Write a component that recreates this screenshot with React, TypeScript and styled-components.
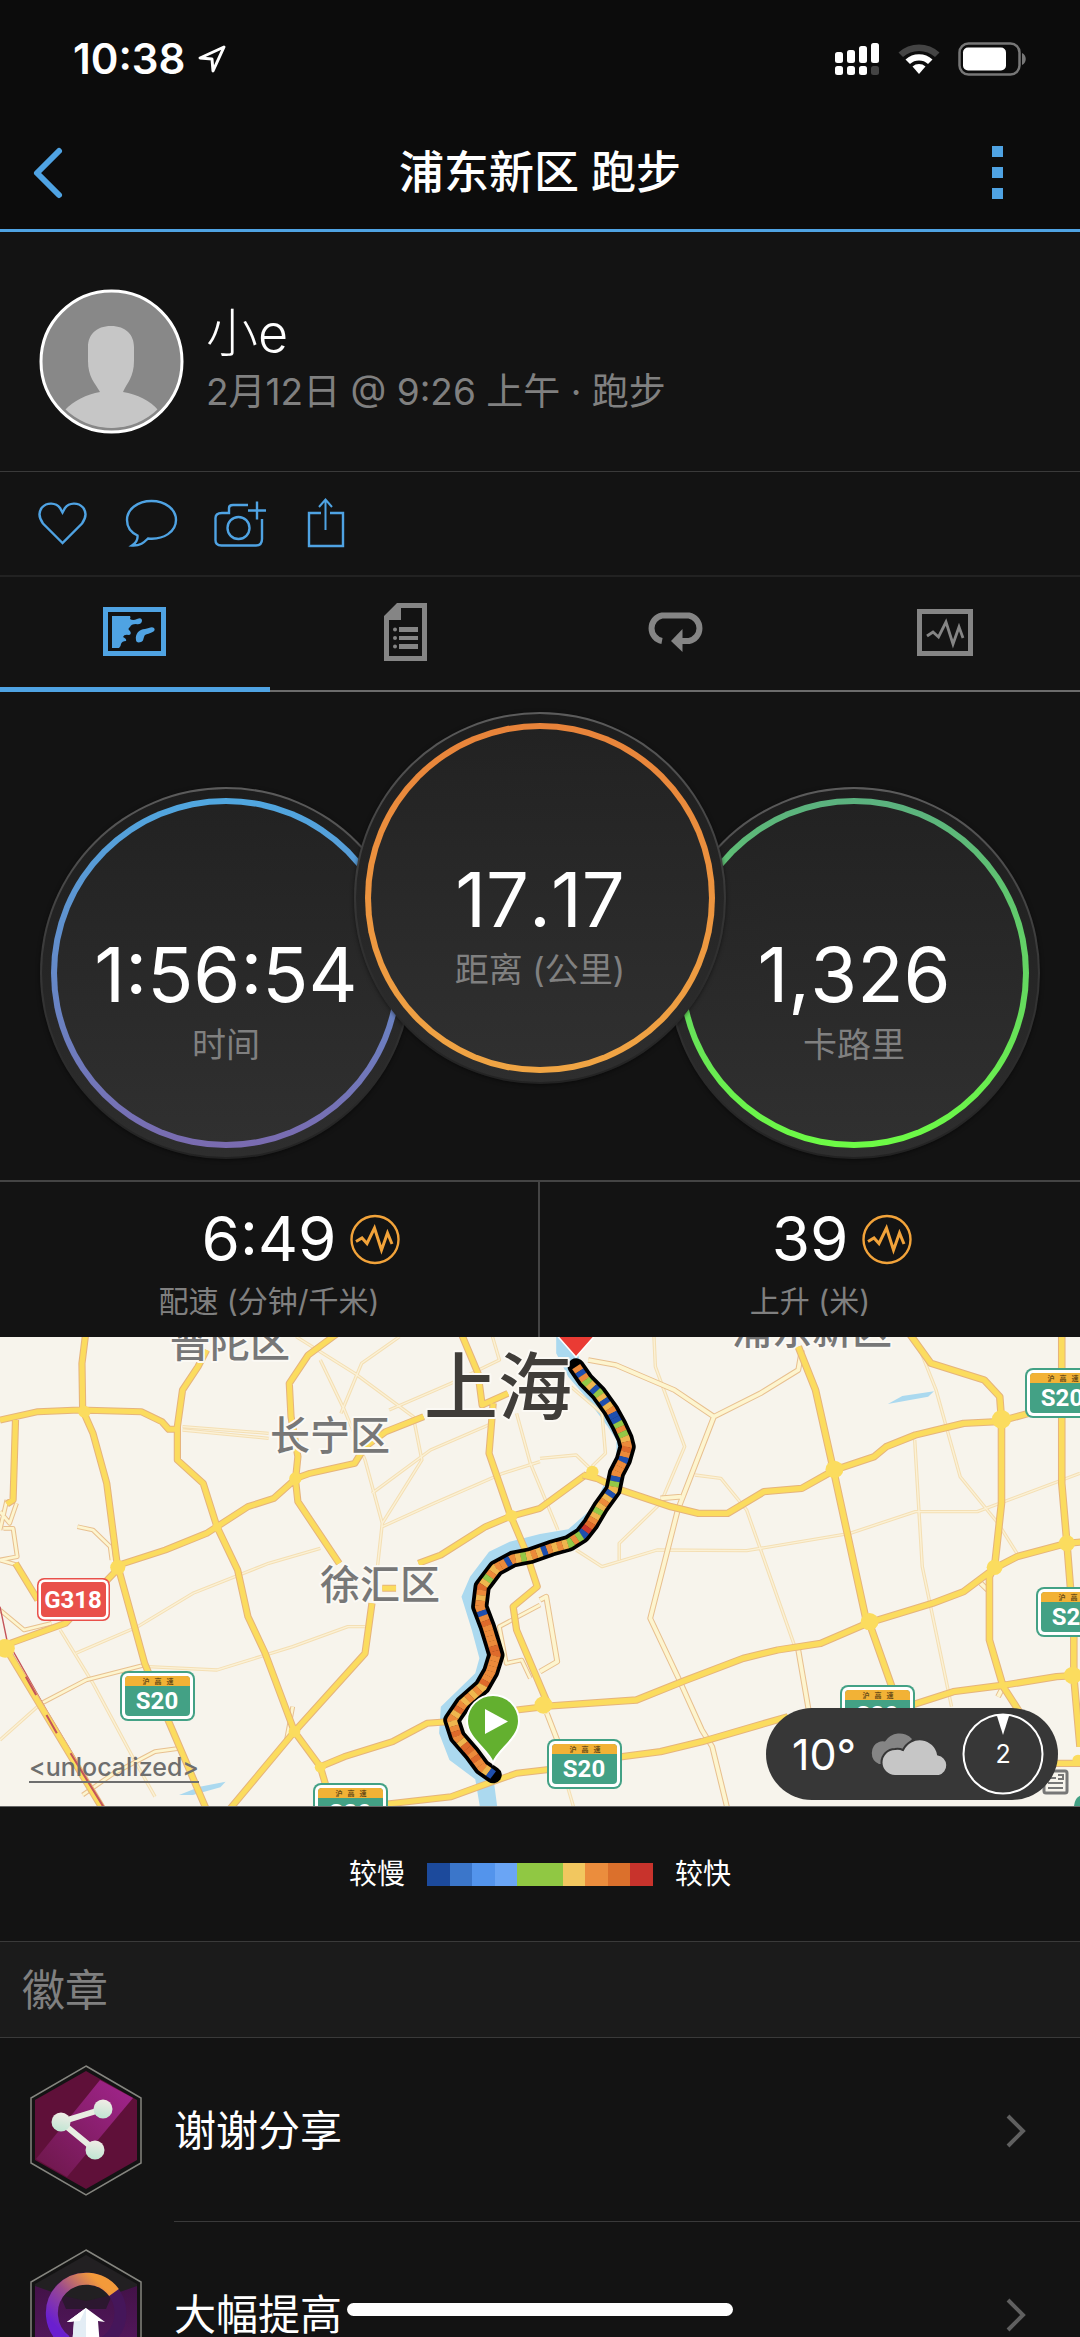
import React from 'react';
import styled, { createGlobalStyle } from 'styled-components';

const colors = {
  page: '#131313',
  header: '#0c0c0c',
  band: '#1b1b1b',
  line: '#3a3a3a',
  blue: '#4fa3e3',
  grey: '#808080',
  amber: '#f2a33a',
};

const GlobalStyle = createGlobalStyle`
  * { box-sizing: border-box; }
  body {
    margin: 0;
    background: ${colors.page};
    color: #fff;
    font-family: Inter, "Noto Sans CJK SC", sans-serif;
  }
  h1, h2, p, ul, dl, dd { margin: 0; padding: 0; }
  button { margin: 0; padding: 0; border: 0; background: none; color: inherit; font: inherit; cursor: pointer; }
  svg { display: block; }
`;

/* ---------- shell ---------- */

const Screen = styled.div`
  display: flex;
  flex-direction: column;
  height: 100vh;
  overflow: hidden;
`;

const Header = styled.header`
  flex: none;
  background: ${colors.header};
  border-bottom: 3px solid ${colors.blue};
`;

const StatusBar = styled.div`
  display: flex;
  align-items: center;
  justify-content: space-between;
  height: 117px;
  padding: 0 53px 0 73px;
`;

const StatusGroup = styled.div`
  display: flex;
  align-items: center;
  gap: ${(p: { $gap: number }) => p.$gap}px;
`;

const Clock = styled.span`
  font-size: 42px;
  font-weight: 600;
  line-height: 48px;
`;

const NavBar = styled.nav`
  display: grid;
  grid-template-columns: 1fr auto 1fr;
  align-items: center;
  height: 112px;
  padding: 0 77px 0 32px;
`;

const NavButton = styled.button<{ $end?: boolean }>`
  justify-self: ${(p) => (p.$end ? 'end' : 'start')};
`;

const Title = styled.h1`
  padding-left: 45px;
  font-size: 45px;
  font-weight: 500;
  line-height: 64px;
`;

const Content = styled.main`
  flex: 1;
  min-height: 0;
  overflow-y: auto;
  scrollbar-width: none;
`;

const HomeIndicator = styled.div`
  position: fixed;
  left: 50%;
  bottom: 21px;
  width: 386px;
  height: 13px;
  margin-left: -193px;
  border-radius: 7px;
  background: #fff;
`;

/* ---------- profile ---------- */

const Profile = styled.section`
  display: flex;
  align-items: center;
  gap: 22px;
  height: 240px;
  padding: 20px 39px 0;
  border-bottom: 1px solid ${colors.line};
`;

const ProfileText = styled.div`
  display: flex;
  flex-direction: column;
`;

const Name = styled.h2`
  font-size: 52px;
  font-weight: 300;
  line-height: 60px;
`;

const When = styled.p`
  color: ${colors.grey};
  font-size: 37px;
  font-weight: 400;
  line-height: 56px;
`;

const Actions = styled.section`
  display: flex;
  align-items: center;
  gap: 36px;
  height: 105px;
  padding: 0 36px 2px;
  border-bottom: 2px solid #222;
`;

const Tabs = styled.div`
  display: grid;
  grid-template-columns: repeat(4, 1fr);
  height: 115px;
`;

const Tab = styled.button<{ $active?: boolean }>`
  display: flex;
  align-items: center;
  justify-content: center;
  padding-bottom: 5px;
  color: ${(p) => (p.$active ? colors.blue : '#858585')};
  box-shadow: ${(p) => (p.$active ? `inset 0 -5px ${colors.blue}` : 'inset 0 -2px #6c6c6c')};
`;

/* ---------- gauges ---------- */

const Gauges = styled.section`
  display: flex;
  justify-content: center;
  align-items: flex-end;
  padding: 20px 0 21px;
  border-bottom: 2px solid #444;
`;

const Rim = styled.div<{ $raised?: boolean }>`
  position: relative;
  z-index: ${(p) => (p.$raised ? 1 : 0)};
  flex: none;
  width: 372px;
  height: 372px;
  margin: ${(p) => (p.$raised ? '0 -58px 75px' : '0')};
  padding: 9px;
  border: 2px solid transparent;
  border-radius: 50%;
  background:
    linear-gradient(#1d1d1d, #2e2e2e) padding-box,
    linear-gradient(#5c5c5c, #363636 50%, #222) border-box;
  box-shadow: 0 1px 4px rgba(0, 0, 0, 0.5);
`;

const Face = styled.div<{ $from: string; $to: string }>`
  display: flex;
  flex-direction: column;
  align-items: center;
  height: 100%;
  padding-top: 124px;
  border: 6px solid transparent;
  border-radius: 50%;
  background:
    linear-gradient(#222, #303030) padding-box,
    linear-gradient(${(p) => p.$from}, ${(p) => p.$to}) border-box;
`;

const GaugeValue = styled.span`
  font-size: 76px;
  font-weight: 400;
  font-kerning: none;
  line-height: 92px;
`;

const GaugeLabel = styled.span`
  color: ${colors.grey};
  font-size: 34px;
  font-weight: 400;
  line-height: 50px;
`;

/* ---------- secondary stats ---------- */

const Stats = styled.section`
  display: grid;
  grid-template-columns: 1fr 1fr;
`;

const Stat = styled.div`
  padding: 20px 0 14px;
  text-align: center;
  &:first-child { border-right: 2px solid #444; }
`;

const StatTop = styled.div`
  display: grid;
  grid-template-columns: 1fr auto 1fr;
  align-items: center;
  gap: 14px;
`;

const StatValue = styled.span`
  grid-column: 2;
  font-size: 62px;
  line-height: 74px;
`;

const StatLabel = styled.p`
  padding-top: 3px;
  color: ${colors.grey};
  font-size: 30px;
  font-weight: 400;
  line-height: 44px;
`;

/* ---------- map ---------- */

const MapBox = styled.section`
  position: relative;
  overflow: hidden;
  border-bottom: 1px solid #666;
`;

const MapLink = styled.a`
  position: absolute;
  left: 29px;
  bottom: 23px;
  border-bottom: 2px solid #6e6e6e;
  color: #6e6e6e;
  font-size: 25px;
  font-weight: 500;
  line-height: 28px;
  text-decoration: none;
`;

const Weather = styled.div`
  position: absolute;
  right: 22px;
  bottom: 6px;
  display: flex;
  align-items: center;
  justify-content: space-between;
  width: 292px;
  height: 92px;
  padding: 0 14px 0 26px;
  border-radius: 46px;
  background: #373737;
`;

const Temperature = styled.span`
  font-size: 43px;
  line-height: 50px;
`;

const Wind = styled.div`
  display: grid;
  place-items: center;
  width: 82px;
  height: 82px;
  font-size: 25px;
  line-height: 30px;
  > * { grid-area: 1 / 1; }
`;

/* ---------- legend ---------- */

const Legend = styled.div`
  display: flex;
  align-items: center;
  justify-content: center;
  gap: 22px;
  height: 135px;
  border-bottom: 1px solid ${colors.line};
  font-size: 28px;
  line-height: 40px;
`;

const Scale = styled.div`
  display: grid;
  grid-template-columns: repeat(10, 1fr);
  width: 226px;
  height: 23px;
`;

const Swatch = styled.span<{ $color: string }>`
  background: ${(p) => p.$color};
`;

/* ---------- badges ---------- */

const SectionTitle = styled.h2`
  padding: 16px 22px 15px;
  border-bottom: 1px solid ${colors.line};
  background: ${colors.band};
  color: ${colors.grey};
  font-size: 43px;
  font-weight: 400;
  line-height: 64px;
`;

const BadgeList = styled.ul`
  list-style: none;
`;

const BadgeRow = styled.button`
  display: grid;
  grid-template-columns: 112px 1fr;
  gap: 32px;
  width: 100%;
  height: 184px;
  padding-left: 30px;
  align-items: center;
  text-align: left;
`;

const BadgeBody = styled.span`
  display: flex;
  align-items: center;
  justify-content: space-between;
  height: 100%;
  padding: 2px 52px 0 0;
  border-bottom: 1px solid ${colors.line};
  font-size: 42px;
  line-height: 60px;
`;

/* ---------- icons ---------- */

const LocationIcon = () => (
  <svg width="30" height="30" viewBox="0 0 30 30" fill="none" stroke="#fff" strokeWidth="3" strokeLinejoin="round">
    <path d="M27 3 L3 14 L15 15 L16 27 Z" />
  </svg>
);

const SignalIcon = () => (
  <svg width="46" height="34" viewBox="0 0 46 34" fill="#fff">
    <rect x="1" y="10" width="8" height="11" rx="2.5" />
    <rect x="13" y="8" width="8" height="13" rx="2.5" />
    <rect x="25" y="4" width="8" height="17" rx="2.5" />
    <rect x="37" y="1" width="8" height="20" rx="2.5" />
    <rect x="1" y="24" width="8" height="9" rx="2.5" />
    <rect x="13" y="24" width="8" height="9" rx="2.5" />
    <rect x="25" y="24" width="8" height="9" rx="2.5" />
    <rect x="37" y="24" width="8" height="9" rx="2.5" fill="#444" />
  </svg>
);

const WifiIcon = () => (
  <svg width="42" height="32" viewBox="0 0 42 32">
    <path d="M0.500 9.500 A30 30 0 0 1 41.500 9.500 L37 14 A24 24 0 0 0 5 14 Z" fill="#444" />
    <path d="M7.500 16.500 A20 20 0 0 1 34.500 16.500 L30 21 A13.500 13.500 0 0 0 12 21 Z" fill="#fff" />
    <path d="M14.500 23.500 A10 10 0 0 1 27.500 23.500 L21 31 Z" fill="#fff" />
  </svg>
);

const BatteryIcon = () => (
  <svg width="69" height="34" viewBox="0 0 69 34">
    <rect x="1.500" y="1.500" width="60" height="31" rx="9" fill="none" stroke="#777" strokeWidth="2.500" />
    <rect x="5" y="5.500" width="43" height="23" rx="5" fill="#fff" />
    <path d="M64 11 C69 13 69 21 64 23 Z" fill="#777" />
  </svg>
);

const BackIcon = () => (
  <svg width="32" height="54" viewBox="0 0 32 54" fill="none" stroke={colors.blue} strokeWidth="6" strokeLinecap="round" strokeLinejoin="round">
    <path d="M27 5 L5 27 L27 49" />
  </svg>
);

const MoreIcon = () => (
  <svg width="11" height="54" viewBox="0 0 11 54" fill={colors.blue}>
    <rect width="11" height="11" />
    <rect y="21" width="11" height="11" />
    <rect y="42" width="11" height="11" />
  </svg>
);

const Avatar = () => (
  <svg width="145" height="145" viewBox="0 0 145 145" role="img" aria-label="小e">
    <defs>
      <clipPath id="avatarClip"><circle cx="72.500" cy="72.500" r="66.500" /></clipPath>
    </defs>
    <circle cx="72.500" cy="72.500" r="70.500" fill="#888" stroke="#fff" strokeWidth="3" />
    <g clipPath="url(#avatarClip)" fill="#c6c6c6">
      <path d="M72 37 C87 37 95 46 95 58 V72 C95 88 88 94 84 103 C98 105 112 112 119 121 C106 136 90 139 72 139 C54 139 38 136 26 121 C34 112 48 105 61 103 C56 94 49 88 49 72 V58 C49 46 57 37 72 37 Z" />
    </g>
  </svg>
);

const actionIconProps = { fill: 'none', stroke: colors.blue, strokeWidth: 2.4 };

const HeartIcon = () => (
  <svg width="52" height="54" viewBox="0 0 52 54" {...actionIconProps}>
    <path d="M26.500 47 L7 27.500 C3 22 2.500 16 6 11.500 C11 6 20 6.500 24 12 L26.500 16.500 L29 12 C33 6.500 42 6 47 11.500 C50.500 16 50 22 46 27.500 Z" />
  </svg>
);

const CommentIcon = () => (
  <svg width="54" height="54" viewBox="0 0 54 54" {...actionIconProps}>
    <path d="M27.500 5 C41.500 5 52 13.500 52 24 C52 35.500 40 44 24 42.500 C20 46.500 16 50 8 49.500 C12.500 46.500 14 43.500 13.500 39.500 C6 36 3 30.500 3 24 C3 13.500 13.500 5 27.500 5 Z" />
  </svg>
);

const CameraIcon = () => (
  <svg width="56" height="54" viewBox="3 0 56 54" {...actionIconProps}>
    <path d="M37 9 H22 Q18 9 18 12 V17 H11 Q4 17 4.500 23 V43 Q4 49.500 10.500 49.500 H45 Q51 49.500 51 43 V23" />
    <circle cx="27.500" cy="32" r="11" />
    <path d="M46 5.500 V23.500 M37 14.500 H55" />
  </svg>
);

const ShareIcon = () => (
  <svg width="40" height="54" viewBox="0 0 40 54" {...actionIconProps}>
    <path d="M15 17 H3 V50 H37 V17 H24" />
    <path d="M19.500 34 V4 M13 11 L19.500 3.500 L26 11" strokeWidth="2" />
  </svg>
);

const MapIcon = () => (
  <svg width="64" height="50" viewBox="0 0 64 50" fill="currentColor">
    <path fillRule="evenodd" d="M0 0 H63 V49 H0 Z M5 5 V44 H58 V5 Z" />
    <path d="M9 9 H27 Q28 10 27 12 Q30 14 34 12 Q39 10 39 14 Q38 18 33 17 Q28 17 27 20 Q24 22 27 24 Q29 27 26 28 Q21 27 20 30 Q24 32 23 34 Q19 34 18 37 Q18 39 16 41 H9 Z" />
    <path d="M33 33 C32 27 36 22 42 22 C46 21 49 19 51 21 C54 25 46 26 42 28 C40 31 41 34 38 35 C35 36 33 35 33 33 Z" />
  </svg>
);

const NotesIcon = () => (
  <svg width="43" height="59" viewBox="0 0 43 59" fill="currentColor">
    <path fillRule="evenodd" d="M13 0 H43 V58 H0 V13 Z M17 5 V17 H5 V53 H38 V5 Z" />
    <circle cx="11" cy="26.500" r="2" />
    <circle cx="11" cy="35" r="2" />
    <circle cx="11" cy="43.500" r="2" />
    <path d="M15 24 H34 V29 H15 Z M15 33 H34 V37 H15 Z M15 41 H34 V46 H15 Z" />
  </svg>
);

const LapIcon = () => (
  <svg width="59" height="41" viewBox="0 0 59 41">
    <path d="M16 29 A13 13 0 0 1 16 3.500 H43 A13 13 0 0 1 43 29 H34" fill="none" stroke="currentColor" strokeWidth="6" />
    <path d="M25 29 L36.500 17 V40 Z" fill="currentColor" />
  </svg>
);

const ChartIcon = () => (
  <svg width="56" height="47" viewBox="0 0 56 47" fill="none" stroke="currentColor">
    <rect x="2.500" y="2.500" width="51" height="42" strokeWidth="5" />
    <path d="M10 27 L16 23 L21.500 28 L29 13 L36 35 L42 18 L46 29" strokeWidth="2.800" />
  </svg>
);

const TrendIcon = () => (
  <svg width="50" height="51" viewBox="0 0 50 51" fill="none" stroke={colors.amber}>
    <circle cx="25" cy="25.500" r="23.500" strokeWidth="2.400" />
    <path d="M6 27.500 L12 24 L17 29.500 L24.500 14 L31.500 36 L37.500 19 L42 30" strokeWidth="3" />
  </svg>
);

const CloudIcon = () => (
  <svg width="84" height="48" viewBox="0 0 84 48">
    <path d="M12 34 A12 12 0 0 1 12 12 Q14 11 18 11.500 A17 17 0 0 1 45 9 L36 20 L16 34 Z" fill="#858585" />
    <path d="M28 46 A13 13 0 0 1 28 19 Q32 18 36 20 A18.500 18.500 0 0 1 71 24.500 A11 11 0 0 1 72 46 Z" fill="#c6c6c6" stroke="#373737" strokeWidth="2" />
  </svg>
);

const CompassIcon = () => (
  <svg width="82" height="82" viewBox="0 0 82 82">
    <circle cx="41" cy="41" r="39.500" fill="none" stroke="#fff" strokeWidth="2" />
    <path d="M34.500 1.500 H47.500 L41 22 Z" fill="#fff" />
  </svg>
);

const ChevronIcon = () => (
  <svg width="24" height="36" viewBox="0 0 24 36" fill="none" stroke="#606060" strokeWidth="4">
    <path d="M4 3 L19 18 L4 33" />
  </svg>
);

const ShareBadge = () => (
  <svg width="112" height="131" viewBox="0 0 112 131">
    <defs>
      <linearGradient id="stripe" x1="1" y1="0" x2="0" y2="1">
        <stop offset="0" stopColor="#a3258e" />
        <stop offset="1" stopColor="#6b1748" />
      </linearGradient>
      <linearGradient id="node" x1="0.600" y1="0" x2="0.400" y2="1">
        <stop offset="0" stopColor="#f1ece6" />
        <stop offset="1" stopColor="#bfe5d2" />
      </linearGradient>
    </defs>
    <path d="M56 1 L111 33 V98 L56 130 L1 98 V33 Z" fill="#131313" stroke="#85857f" strokeWidth="1.500" />
    <path d="M56 6 L107 35 V95 L56 124 L5 95 V35 Z" fill="#5f1039" />
    <path d="M70 15 L103 33 L37 112 L6 94 Z" fill="url(#stripe)" />
    <path d="M73 44 L31 57 L65 85" fill="none" stroke="#e8ede2" strokeWidth="6" />
    <g fill="url(#node)">
      <circle cx="73" cy="44" r="9.500" />
      <circle cx="31" cy="57" r="9.500" />
      <circle cx="65" cy="85" r="9.500" />
    </g>
  </svg>
);

const ImproveBadge = () => (
  <svg width="112" height="131" viewBox="0 0 112 131">
    <defs>
      <linearGradient id="wall" x1="0" y1="0" x2="0" y2="1">
        <stop offset="0" stopColor="#431248" />
        <stop offset="1" stopColor="#5a1a66" />
      </linearGradient>
      <linearGradient id="sweep" x1="0" y1="1" x2="1" y2="0">
        <stop offset="0.150" stopColor="#6a1fd0" />
        <stop offset="0.500" stopColor="#9a4a90" />
        <stop offset="0.850" stopColor="#f39a3a" />
      </linearGradient>
    </defs>
    <path d="M56 1 L111 33 V98 L56 130 L1 98 V33 Z" fill="#131313" stroke="#85857f" strokeWidth="1.500" />
    <path d="M56 6 L107 35 V95 L56 124 L5 95 V35 Z" fill="#222022" />
    <path d="M5 37 L56 55 L107 37 V95 L56 124 L5 95 Z" fill="url(#wall)" />
    <path d="M30 46 L56 52 L82 46 L76 60 H36 Z" fill="#2c1730" />
    <circle cx="56" cy="64" r="34.500" fill="none" stroke="#45165a" strokeWidth="12" />
    <path d="M36 92 A34.500 34.500 0 1 1 84 43.500" fill="none" stroke="url(#sweep)" strokeWidth="12" />
    <path d="M56 59 L75 73 L68 72 L71 110 H41 L44 72 L37 73 Z" fill="#fff" />
    <path d="M56 59 L56 110 H41 L44 72 L37 73 Z" fill="#e3edf5" />
    <path d="M56 59 L37 73 L50 72 Z" fill="#fff" />
  </svg>
);

/* ---------- map drawing ---------- */

const westArterials = [
  'M250 0 L238 100 L240 240 L270 310 L310 460 L340 700 L420 1000 L490 1175 L600 1440',
  'M0 270 L110 245 L230 240 L410 245 L470 275 L490 298 L512 298',
  'M45 270 L38 510 L20 522',
  'M600 60 L575 110 L530 180 L515 290 L515 390 L590 460 L630 590 L690 720 L720 860 L770 970 L855 1205 L930 1310 L950 1380',
  'M980 10 L895 75 L840 160 L845 260 L865 380 L858 450 L865 515 L985 700',
  'M0 955 L30 940 L190 880 L330 730 L345 705 L480 660 L600 610 L720 530 L795 505 L860 445 L900 430 L1030 400 L1060 350 L1120 305 L1230 260',
  'M1335 0 L1388 130 L1400 225 L1475 190 M1432 220 L1420 370 L1480 550 L1525 660 L1560 770 L1490 830 L1500 900 L1590 1120',
  'M1215 700 L1280 675 L1410 590 L1480 560 L1568 535 L1700 435',
  'M1110 775 H1150 M1080 820 L1060 970 L855 1205 L665 1440',
  'M930 1310 L1000 1280 L1140 1235 L1240 1180 L1300 1175',
  'M20 960 L300 1440',
  'M1100 1425 L1310 1400 L1430 1355 L1500 1330 L1600 1318',
  'M1500 1140 L1580 1130',
  'M45 700 L110 810',
];

const eastArterials = [
  'M750 50 L800 180 L850 410 L945 860 L960 890 L1025 1080',
  'M1065 0 L1135 100 L1290 150 L1335 200 L1340 270 L1340 520 L1320 710 L1305 740 L1305 930 L1345 1070 L1395 1150',
  'M125 435 L165 445 L235 480 L380 530 L460 550 L545 550 L650 485 L760 475 L855 420 L970 380 L1005 350 L1090 315 L1230 280 L1330 275 L1420 250',
  'M1515 0 V460 L1530 640 L1550 900 L1550 1040 L1568 1250',
  'M0 1130 L280 1110 L420 1052 L590 985 L690 960 L815 940 L950 880 L1140 820 L1230 785 L1320 715 L1385 680 L1530 640 L1580 635',
  'M1080 1125 L1200 1085 L1350 1065 L1500 1040 L1580 1035',
  'M200 1285 L350 1265 L470 1235 L720 1160',
  'M1490 1300 H1580',
];

const westLanes = [
  'M120 1120 L250 1050 L420 1005',
  'M0 600 L20 510 M0 545 L28 580 L48 520 M10 595 H38 L50 680 L0 690',
  'M0 690 L50 705 M0 840 L70 900 L150 880',
  'M225 590 L270 600 L320 650 L325 690',
  'M240 1395 L330 1330 L450 1265 L520 1255',
  'M830 1240 L850 1130 M1568 825 L1450 890 L1470 1000 L1515 990 L1540 1045',
];

const eastLanes = [
  'M140 90 L220 105 L390 180 L505 260 L640 190 L750 120 L760 60',
  'M505 260 L400 540 L320 865 L400 1040 L470 1200 L500 1250 L545 1440',
  'M750 960 L780 1140',
  'M0 810 L18 800 L50 995 L0 1025 M20 1150 L50 1230',
  'M350 505 L410 500 M1280 760 L1300 780 M1330 1100 L1350 1060',
];

const westStreets = [
  'M220 970 L400 890 L560 790 L780 700 L930 655',
  'M175 900 L270 1060 L390 1290 L450 1400',
  'M430 1010 L630 1020 L850 950 L1010 890 H1060',
  'M530 290 L780 310 M530 300 L780 325',
  'M860 20 L1030 130 L1200 260 L1225 390 L1110 580 L1095 720',
  'M930 90 L1000 240 L1060 390 L1110 580 M990 250 L1050 100 L1160 20',
  'M1110 590 L1260 520 L1460 430 L1568 395 M1080 490 L1250 360 L1430 280 M1130 240 L1310 160 L1450 90 L1430 20',
  'M0 1230 L120 1120 M1500 250 L1540 400 L1620 600',
];

const eastStreets = [
  'M330 0 L335 110 L420 350 L350 520 L230 640 V690',
  'M105 660 L180 710 L340 660 L600 662 L900 610 L1090 545 H1270 L1568 430',
  'M450 435 L525 445 L600 540 L740 950',
  'M1100 50 L1150 180 L1220 440 L1330 580 L1385 670',
  'M1088 330 L1110 710 L1195 1130',
  'M90 170 L180 250 L190 370 L150 410 M0 385 L105 375 L150 420',
  'M80 1370 L100 1440',
];

const route =
  'M1673 110 L1700 150 L1738 190 L1773 240 L1797 285 L1815 325 L1821 350 L1810 390 L1790 430 L1780 480 L1745 530 L1715 582 L1690 615 L1652 640 L1600 655 L1540 677 L1490 687 L1440 715 L1400 770 L1393 830 L1415 890 L1430 940 L1440 975 L1425 1025 L1400 1070 L1345 1120 L1312 1170 L1328 1220 L1370 1270 L1400 1312 L1432 1335';

const river =
  'M1615 0 L1655 0 L1690 110 L1773 240 L1821 350 L1790 430 L1715 582 L1652 640 L1540 677 L1440 715 L1393 830 L1440 975 L1400 1070 L1312 1170 L1370 1270 L1432 1338 L1445 1440 L1395 1440 L1380 1348 L1305 1290 L1275 1210 L1280 1130 L1380 1030 L1392 985 L1370 900 L1340 800 L1365 740 L1420 665 L1480 635 L1568 612 L1650 598 L1725 530 L1755 460 L1790 400 L1790 330 L1765 290 L1700 200 L1650 140 L1615 70 Z';

const paceColors: Record<string, string> = {
  b: '#1f4fae', g: '#93c846', y: '#efb64e', o: '#ec8a3a', d: '#de6a2b', r: '#c8352c',
};

// One letter per stretch of the run, each 1/100 of its length, finish first.
const pace = 'obogybgybyobbgogyodobooobgybyoygyodrbgogyoyobyoygyobooyogydoyoobodooooddooooodyoyoyodyoyodoyddodooyb';

const Shield = ({ x, y }: { x: number; y: number }) => (
  <g transform={`translate(${x} ${y})`}>
    <rect width="75" height="50" rx="8" fill="#43a185" />
    <rect x="2" y="2" width="71" height="46" rx="6" fill="#fff" />
    <rect x="5" y="5" width="65" height="40" rx="4" fill="#43a185" />
    <path d="M5 15 V9 Q5 5 9 5 H66 Q70 5 70 9 V15 Z" fill="#f2b236" />
    <g fill="#6b4c16" fontSize="7" fontWeight="700" textAnchor="middle">
      <text x="26" y="13">沪</text>
      <text x="38" y="13">高</text>
      <text x="50" y="13">速</text>
    </g>
    <text x="37" y="38" fill="#fff" fontFamily="Roboto" fontSize="24" fontWeight="700" textAnchor="middle">S20</text>
  </g>
);

const Roads = ({ lines, color, width, casing }: { lines: string[]; color: string; width: number; casing: string }) => (
  <g fill="none" strokeLinejoin="round">
    <path d={lines.join(' ')} stroke={casing} strokeWidth={width + 6} />
    <path d={lines.join(' ')} stroke={color} strokeWidth={width} />
  </g>
);

const RouteMap = () => (
  <svg width="100%" viewBox="0 0 1080 469" preserveAspectRatio="xMidYMid slice" role="img" aria-label="上海">
    <rect width="1080" height="469" fill="#f7f4ec" />
    <g transform="translate(0 -7) scale(0.34439 0.33333)">
      <path d={river} fill="#abd9ef" />
      <path d="M520 1395 L580 1370 L655 1355 L640 1372 L560 1395 Z" fill="#abd9ef" />
      <path d="M2578 222 L2620 198 L2712 184 L2695 200 Z" fill="#abd9ef" />
      <Roads lines={westStreets} color="#fbf1d6" width={4} casing="#f4dfb4" />
      <g transform="translate(1568 0)">
        <Roads lines={eastStreets} color="#fbf1d6" width={4} casing="#f4dfb4" />
        <Roads lines={eastLanes} color="#fdf5cf" width={11} casing="#e8c090" />
      </g>
      <Roads lines={westLanes} color="#fdf5cf" width={8} casing="#e8c090" />
      <path d="M0 830 L20 930 L140 1150 L210 1270 L300 1440" fill="none" stroke="#c4545a" strokeWidth="4" />
      <Roads lines={westArterials} color="#fbdc5e" width={15} casing="#e6b47c" />
      <g transform="translate(1568 0)">
        <Roads lines={eastArterials} color="#fbdc5e" width={16} casing="#e6b47c" />
      </g>
      <path d="M75 1040 L105 1095 M135 1155 L165 1210 M205 1270 L300 1430" fill="none" stroke="#c4545a" strokeWidth="6" />
      <g fill="#fbdc5e">
        <circle cx="15" cy="955" r="28" />
        <circle cx="342" cy="712" r="22" />
        <circle cx="245" cy="245" r="18" />
        <circle cx="858" cy="445" r="18" />
        <circle cx="630" cy="592" r="13" />
        <circle cx="1485" cy="558" r="18" />
        <circle cx="855" cy="1205" r="17" />
        <circle cx="930" cy="1312" r="16" />
        <circle cx="1578" cy="1125" r="26" />
        <circle cx="1720" cy="425" r="18" />
        <circle cx="2423" cy="418" r="26" />
        <circle cx="2525" cy="875" r="26" />
        <circle cx="2908" cy="268" r="28" />
        <circle cx="2888" cy="712" r="23" />
        <circle cx="3098" cy="640" r="24" />
        <circle cx="3115" cy="1036" r="26" />
        <circle cx="3130" cy="1290" r="16" />
      </g>
      <g fill="none" strokeLinejoin="round">
        <path d={route} stroke="#000" strokeWidth="50" strokeLinecap="round" />
        {pace.split('').map((letter, i) => (
          <path key={i} d={route} pathLength={100} stroke={paceColors[letter]} strokeWidth="28" strokeDasharray={`0 ${i} 1.05 200`} />
        ))}
      </g>
    </g>

    <g fill="#777" stroke="#fbf9f4" strokeWidth="4" strokeLinejoin="round" paintOrder="stroke" fontSize="40" fontWeight="500">
      <text x="170" y="20">普陀区</text>
      <text x="270" y="113">长宁区</text>
      <text x="320" y="262">徐汇区</text>
      <text x="732" y="7">浦东新区</text>
      <text x="424" y="77" fill="#403d39" fontSize="74">上海</text>
    </g>

    <g>
      <rect x="37" y="241" width="73" height="43" rx="7" fill="#e9504a" />
      <rect x="38.500" y="242.500" width="70" height="40" rx="6" fill="#fff" />
      <rect x="41" y="245" width="65" height="35" rx="4" fill="#e9504a" />
      <text x="73" y="271" fill="#fff" fontFamily="Roboto" fontSize="24" fontWeight="700" textAnchor="middle">G318</text>
    </g>
    <Shield x={120} y={334} />
    <Shield x={313} y={446} />
    <Shield x={547} y={402} />
    <Shield x={840} y={348} />
    <Shield x={1025} y={31} />
    <Shield x={1036} y={250} />
    <path d="M1074 469 Q1075 458 1084 458 V469 Z" fill="#43a185" />

    <g fill="none" stroke="#777" strokeWidth="3">
      <rect x="1044" y="434" width="23" height="22" rx="2" fill="#f7f4ec" />
      <path d="M1048 451 H1063 M1048 446 H1063 M1048 441 H1056 M1058 438 H1063 V442 H1058" strokeWidth="2" />
    </g>

    <path d="M546 -14 H606 L576 20 Z" fill="#ea3b34" stroke="#fff" strokeWidth="1.500" />
    <path d="M493 426 C488 412 467 402 467 384 A26 26 0 0 1 519 384 C519 402 498 412 493 426 Z" fill="#63b02f" stroke="#fff" strokeWidth="2" />
    <path d="M485 372 L508 384.500 L485 397 Z" fill="#fff" />
  </svg>
);

/* ---------- data ---------- */

const gauges = [
  { value: '1:56:54', label: '时间', from: '#50a7e0', to: '#7a6bb0' },
  { value: '17.17', label: '距离 (公里)', from: '#e8833a', to: '#f0a544', raised: true },
  { value: '1,326', label: '卡路里', from: '#5bb17f', to: '#6dfb45' },
];

const stats = [
  { value: '6:49', label: '配速 (分钟/千米)' },
  { value: '39', label: '上升 (米)' },
];

const tabs = [
  { name: '地图', icon: <MapIcon /> },
  { name: '详情', icon: <NotesIcon /> },
  { name: '计圈', icon: <LapIcon /> },
  { name: '图表', icon: <ChartIcon /> },
];

const actions = [
  { name: '赞', icon: <HeartIcon /> },
  { name: '评论', icon: <CommentIcon /> },
  { name: '添加照片', icon: <CameraIcon /> },
  { name: '分享', icon: <ShareIcon /> },
];

const legendColors = ['#1c4a9c', '#3b76ca', '#5394ec', '#6aa5f5', '#90c843', '#90c843', '#f2c75f', '#eb8d3d', '#db702c', '#c8332c'];

const badges = [
  { name: '谢谢分享', icon: <ShareBadge /> },
  { name: '大幅提高', icon: <ImproveBadge /> },
];

export default function App() {
  return (
    <Screen>
      <GlobalStyle />
      <Header>
        <StatusBar>
          <StatusGroup $gap={12}>
            <Clock>10:38</Clock>
            <LocationIcon />
          </StatusGroup>
          <StatusGroup $gap={18}>
            <SignalIcon />
            <WifiIcon />
            <BatteryIcon />
          </StatusGroup>
        </StatusBar>
        <NavBar>
          <NavButton aria-label="返回"><BackIcon /></NavButton>
          <Title>浦东新区 跑步</Title>
          <NavButton $end aria-label="更多"><MoreIcon /></NavButton>
        </NavBar>
      </Header>

      <Content>
        <Profile>
          <Avatar />
          <ProfileText>
            <Name>小e</Name>
            <When>2月12日 @ 9:26 上午 · 跑步</When>
          </ProfileText>
        </Profile>

        <Actions>
          {actions.map((a) => (
            <button key={a.name} aria-label={a.name}>{a.icon}</button>
          ))}
        </Actions>

        <Tabs role="tablist">
          {tabs.map((t, i) => (
            <Tab key={t.name} role="tab" aria-label={t.name} aria-selected={i === 0} $active={i === 0}>{t.icon}</Tab>
          ))}
        </Tabs>

        <Gauges>
          {gauges.map((g) => (
            <Rim key={g.label} $raised={g.raised}>
              <Face $from={g.from} $to={g.to}>
                <GaugeValue>{g.value}</GaugeValue>
                <GaugeLabel>{g.label}</GaugeLabel>
              </Face>
            </Rim>
          ))}
        </Gauges>

        <Stats>
          {stats.map((s) => (
            <Stat key={s.label}>
              <StatTop>
                <StatValue>{s.value}</StatValue>
                <TrendIcon />
              </StatTop>
              <StatLabel>{s.label}</StatLabel>
            </Stat>
          ))}
        </Stats>

        <MapBox>
          <RouteMap />
          <MapLink href="#legal">&lt;unlocalized&gt;</MapLink>
          <Weather>
            <Temperature>10°</Temperature>
            <CloudIcon />
            <Wind>
              <CompassIcon />
              <span>2</span>
            </Wind>
          </Weather>
        </MapBox>

        <Legend>
          <span>较慢</span>
          <Scale>
            {legendColors.map((c, i) => (
              <Swatch key={i} $color={c} />
            ))}
          </Scale>
          <span>较快</span>
        </Legend>

        <SectionTitle>徽章</SectionTitle>
        <BadgeList>
          {badges.map((b) => (
            <li key={b.name}>
              <BadgeRow>
                {b.icon}
                <BadgeBody>
                  {b.name}
                  <ChevronIcon />
                </BadgeBody>
              </BadgeRow>
            </li>
          ))}
        </BadgeList>
      </Content>
      <HomeIndicator />
    </Screen>
  );
}
